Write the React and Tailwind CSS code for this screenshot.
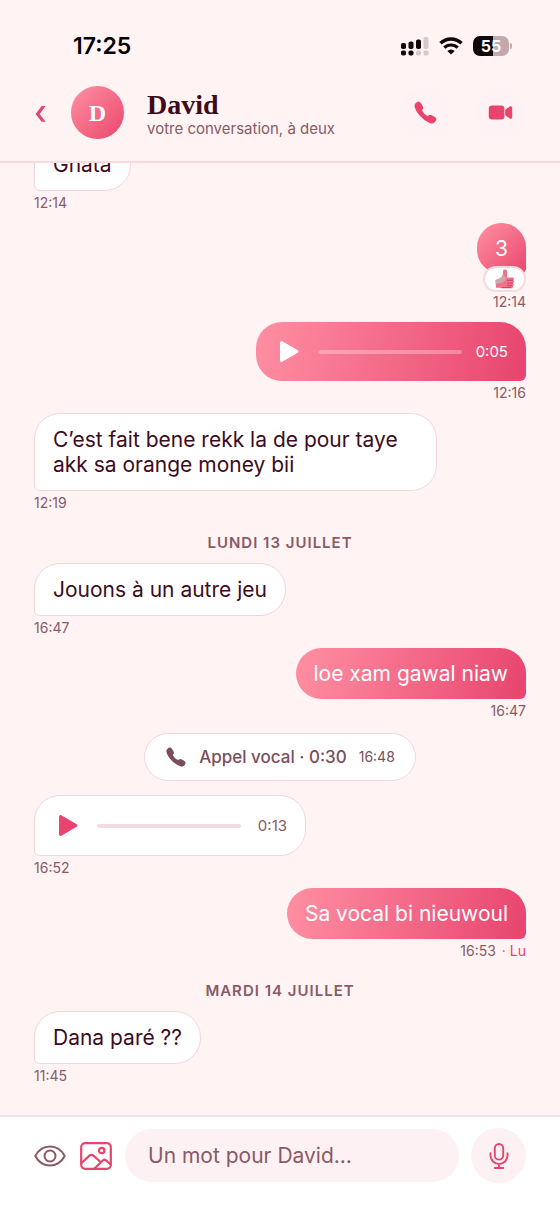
import { IoCall, IoVideocam } from "react-icons/io5";

const DAY_BEFORE = [
  { kind: "text", from: "them", text: "Gnata", time: "12:14" },
  { kind: "text", from: "me", text: "3", time: "12:14", reaction: true },
  { kind: "voice", from: "me", length: "0:05", time: "12:16" },
  {
    kind: "text",
    from: "them",
    text: "C’est fait bene rekk la de pour taye akk sa orange money bii",
    time: "12:19",
  },
];

const MONDAY = [
  { kind: "text", from: "them", text: "Jouons à un autre jeu", time: "16:47" },
  { kind: "text", from: "me", text: "loe xam gawal niaw", time: "16:47" },
  { kind: "call", length: "0:30", time: "16:48" },
  { kind: "voice", from: "them", length: "0:13", time: "16:52" },
  { kind: "text", from: "me", text: "Sa vocal bi nieuwoul", time: "16:53", read: true },
];

const TUESDAY = [{ kind: "text", from: "them", text: "Dana paré ??", time: "11:45" }];

function StatusBar() {
  return (
    <div className="flex items-center justify-between pt-8 pr-12 pl-[73px] text-black">
      <span className="text-[23px] leading-7 font-semibold">17:25</span>
      <div className="flex items-center gap-2.5">
        <svg className="h-5 w-7" viewBox="0 0 28 20" aria-hidden="true">
          <g fill="#12060a">
            <rect x="0" y="7" width="5" height="6" rx="1.8" />
            <rect x="7.5" y="5.5" width="5" height="7.5" rx="1.8" />
            <rect x="15" y="3.5" width="5" height="9.5" rx="1.8" />
            <rect x="0" y="14.5" width="5" height="5" rx="1.8" />
            <rect x="7.5" y="14.5" width="5" height="5" rx="1.8" />
          </g>
          <g fill="#d8c8cb">
            <rect x="22.5" y="1" width="5" height="12" rx="1.8" />
            <rect x="15" y="14.5" width="5" height="5" rx="1.8" />
            <rect x="22.5" y="14.5" width="5" height="5" rx="1.8" />
          </g>
        </svg>
        <svg className="h-[18px] w-6" viewBox="0 0 24 18" fill="none" stroke="#12060a" aria-hidden="true">
          <path d="M1.5 6.3a15 15 0 0 1 21 0" strokeWidth="3.4" />
          <path d="M5.3 10.7a9.6 9.6 0 0 1 13.4 0" strokeWidth="3.2" />
          <path d="M12 17.5 8.3 13.9a5.3 5.3 0 0 1 7.400 0z" fill="#12060a" stroke="none" />
        </svg>
        <div className="flex items-center gap-px">
          <div className="flex h-5 w-9 items-center justify-center rounded-[7px] bg-linear-to-r from-[#12060a] from-55% to-[#c3a9ae] to-55% text-base leading-5 font-bold text-white">
            55
          </div>
          <div className="h-1.5 w-0.5 rounded-r-full bg-[#c3a9ae]" />
        </div>
      </div>
    </div>
  );
}

function Header() {
  return (
    <header className="shrink-0 border-b-2 border-[#f8dade]">
      <StatusBar />
      <div className="flex items-center px-[34px] pt-[26px] pb-[22px]">
        <button type="button" aria-label="Retour" className="mr-[25px] text-[#e8446e]">
          <svg className="h-[18px] w-3" viewBox="0 0 12 18" aria-hidden="true">
            <path d="M7.600 2H11.600L5.600 10L11.600 17.700H7.600L1.600 10Z" fill="currentColor" />
          </svg>
        </button>
        <div className="flex size-[53px] shrink-0 items-center justify-center rounded-full bg-linear-135 from-[#ff8fa3] to-[#e8446e] font-['Liberation_Serif',serif] text-2xl font-bold text-white">
          D
        </div>
        <div className="ml-[23px] min-w-0 flex-1 pt-1">
          <h1 className="font-['Liberation_Serif',serif] text-[28px] leading-7 font-bold text-[#3d0c1c]">David</h1>
          <p className="truncate text-[15px] leading-5 text-[#8a5a66]">votre conversation, à deux</p>
        </div>
        <div className="flex gap-[23px] text-[#e8446e]">
          <button type="button" aria-label="Appel vocal" className="flex size-[52px] items-center justify-center rounded-full bg-[#fef2f4]">
            <IoCall className="size-[25px]" />
          </button>
          <button type="button" aria-label="Appel vidéo" className="flex size-[52px] items-center justify-center rounded-full bg-[#fef2f4]">
            <IoVideocam className="size-[25px]" />
          </button>
        </div>
      </div>
    </header>
  );
}

function ThumbsUp() {
  return (
    <svg className="h-5 w-5" viewBox="0 0 20 20" role="img" aria-label="Pouce levé">
      <path
        d="M.6 11C3 10.200 4.800 9.600 6.300 8.200 7.900 6.600 8.200 4.500 8.100 2.200 8.100-.2 11.900-.2 12.100 2.400 12.200 4.600 12 6.600 11.900 8.400H17.600C19.500 8.400 19.600 10.900 18.100 11.200 19.600 11.600 19.400 13.800 17.900 14 19.100 14.500 18.900 16.400 17.500 16.600 18.500 17.300 18 19.300 16.300 19.300H8.500C5.500 19.300 4.500 18.500 1 18.700Z"
        fill="#f0718c"
      />
      <path d="M.6 11C3 10.200 5 9.500 6.300 8.200L8.600 5.500 11 8.400C10.800 11.500 9.200 13.800 6.200 13.800 4.500 13.800 2.500 15 .8 15Z" fill="#d2a4ac" />
      <path d="M12 11.300h6M12.200 14.100h5.600M12 16.700h5.500M7 18.600h9" stroke="#cc4266" strokeWidth="1" fill="none" />
    </svg>
  );
}

function gradientFor(message) {
  return message.kind === "text" && message.text.length < 4 ? "bg-linear-135" : "bg-linear-[102deg]";
}

function Bubble({ message, children }) {
  const look =
    message.from === "me"
      ? `rounded-br-md from-[#ff8fa3] to-[#e8446e] text-white ${gradientFor(message)}`
      : "rounded-bl-md border border-[#f3d6dc] bg-white text-[#3d0c1c]";
  return <div className={`rounded-[26px] px-[18px] py-[13px] text-[21px] leading-[25px] ${look}`}>{children}</div>;
}

function VoiceNote({ from, length }) {
  const mine = from === "me";
  return (
    <div className="flex items-center py-1">
      <button type="button" aria-label="Écouter le message vocal" className={`ml-1 ${mine ? "text-white" : "text-[#e8446e]"}`}>
        <svg className="h-[25px] w-[22px]" viewBox="0 0 22 25" aria-hidden="true">
          <path d="M3.500 3.500 19 12.500 3.500 21.500Z" fill="currentColor" stroke="currentColor" strokeWidth="3" strokeLinejoin="round" />
        </svg>
      </button>
      <div className={`ml-[18px] h-1 w-36 rounded-full ${mine ? "bg-white/30" : "bg-[#f5dae0]"}`} />
      <span className={`ml-3.5 min-w-8 text-right text-[15px] leading-5 ${mine ? "text-white" : "text-[#8a5a66]"}`}>{length}</span>
    </div>
  );
}

function Call({ length, time }) {
  return (
    <div className="mt-0.5 mb-1 flex items-center self-center rounded-full border border-[#f3d6dc] bg-white px-5 py-[11px] text-[#7a4f5b]">
      <IoCall className="size-[22px]" />
      <span className="ml-3 text-[17px] leading-6 font-medium">Appel vocal · {length}</span>
      <time className="ml-3 text-sm leading-5">{time}</time>
    </div>
  );
}

function Message({ message }) {
  if (message.kind === "call") return <Call length={message.length} time={message.time} />;
  const mine = message.from === "me";
  return (
    <article className={`flex max-w-[82%] flex-col ${mine ? "items-end self-end" : "items-start self-start"}`}>
      <Bubble message={message}>
        {message.kind === "voice" ? <VoiceNote from={message.from} length={message.length} /> : message.text}
      </Bubble>
      {message.reaction && (
        <div className="relative -mt-2 flex h-[26px] w-[43px] items-center justify-center rounded-full border-2 border-[#f5dae0] bg-white">
          <ThumbsUp />
        </div>
      )}
      <p className={`text-sm leading-5 text-[#8a5a66] ${message.reaction ? "" : "mt-0.5"}`}>
        <time>{message.time}</time>
        {message.read && <span className="ml-1.5 text-[#e8446e]">· Lu</span>}
      </p>
    </article>
  );
}

function Day({ label }) {
  return (
    <h2 className="mt-2.5 text-center text-[15px] leading-5 font-semibold tracking-[1px] text-[#8a5a66] uppercase">{label}</h2>
  );
}

function Composer() {
  return (
    <form className="flex shrink-0 items-center border-t-2 border-[#f8e0e4] bg-white px-[34px] pt-[11px] pb-[34px]" onSubmit={(e) => e.preventDefault()}>
      <button type="button" aria-label="Vue unique" className="text-[#8a5a66]">
        <svg className="h-6 w-8" viewBox="0 0 32 24" fill="none" stroke="currentColor" strokeWidth="2" aria-hidden="true">
          <path d="M1.300 12C4.500 6 10 2.500 16 2.500S27.500 6 30.700 12C27.500 18 22 21.500 16 21.500S4.500 18 1.300 12Z" strokeLinejoin="round" />
          <circle cx="16" cy="12" r="5.500" />
        </svg>
      </button>
      <button type="button" aria-label="Envoyer une photo" className="ml-3.5 text-[#e8446e]">
        <svg className="h-7 w-8" viewBox="0 0 32 28" fill="none" stroke="currentColor" strokeWidth="2.2" strokeLinejoin="round" strokeLinecap="round" aria-hidden="true">
          <rect x="1.200" y="1.200" width="29.600" height="25.600" rx="4" />
          <circle cx="21.700" cy="8.500" r="2.700" />
          <path d="M1.500 21 9.500 13.600Q11.500 12 13.500 13.600L20 19.500M14.500 26.500 23 18.300Q24.500 17 26 18.300L31 22.500" />
        </svg>
      </button>
      <input
        type="text"
        aria-label="Message"
        placeholder="Un mot pour David…"
        className="ml-[13px] h-[53px] min-w-0 flex-1 rounded-full bg-[#fdf1f3] px-[23px] text-[21px] text-[#3d0c1c] outline-none placeholder:text-[#8a5a66]"
      />
      <button type="button" aria-label="Message vocal" className="ml-3 flex size-[55px] items-center justify-center rounded-full bg-[#fdf1f3] text-[#e8446e]">
        <svg className="h-[26px] w-5" viewBox="0 0 20 26" fill="none" stroke="currentColor" strokeWidth="1.900" strokeLinecap="round" aria-hidden="true">
          <rect x="5.800" y="1" width="8.400" height="15.600" rx="4.200" />
          <path d="M1.500 10.200V12.500a8.500 8.500 0 0 0 17 0V10.200M10 21v4M5.800 25h8.400" />
        </svg>
      </button>
    </form>
  );
}

export default function App() {
  return (
    <div className="flex h-screen flex-col bg-[#fff3f3] font-[Inter,sans-serif]">
      <Header />
      <main className="flex min-h-0 flex-1 flex-col-reverse overflow-y-auto [scrollbar-width:none]">
        <div className="flex flex-col gap-2.5 px-[34px] pb-[29px]">
          {DAY_BEFORE.map((m, i) => <Message key={i} message={m} />)}
          <Day label="Lundi 13 juillet" />
          {MONDAY.map((m, i) => <Message key={i} message={m} />)}
          <Day label="Mardi 14 juillet" />
          {TUESDAY.map((m, i) => <Message key={i} message={m} />)}
        </div>
      </main>
      <Composer />
    </div>
  );
}
